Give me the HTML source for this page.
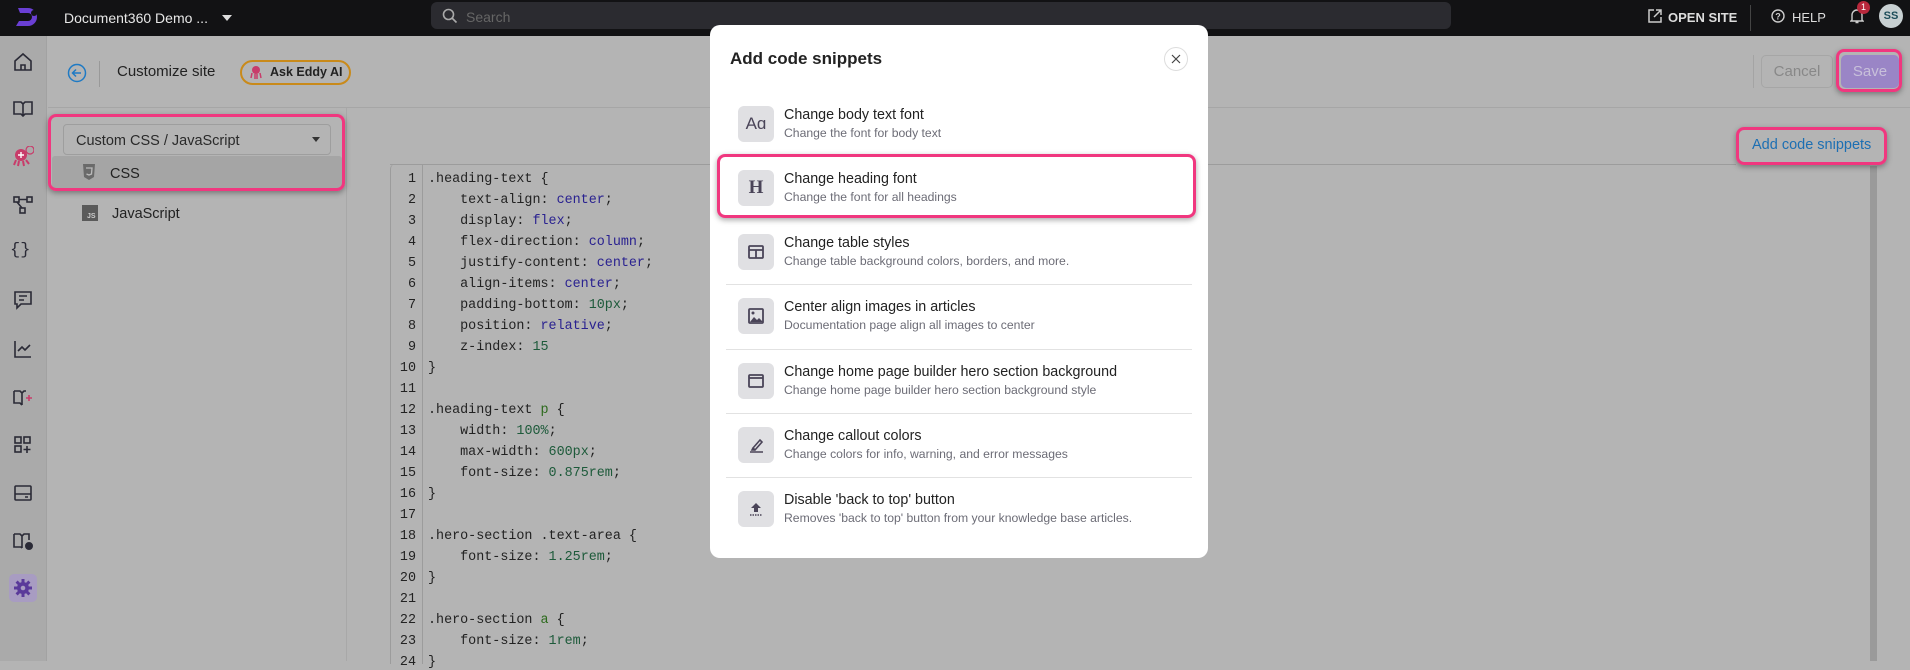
<!DOCTYPE html>
<html><head><meta charset="utf-8"><style>
*{box-sizing:border-box;margin:0;padding:0}
body{width:1910px;height:661px;overflow:hidden;position:relative;background:#b4b4b4;font-family:"Liberation Sans",sans-serif;color:#222}
.abs{position:absolute}
.top{left:0;top:0;width:1910px;height:36px;background:#121214}
.side{left:0;top:36px;width:47px;height:625px;background:#aaaaaa;border-right:1px solid #a2a2a2}
.ic{position:absolute;left:12px;width:22px;height:22px}
.pink{position:absolute;border:3px solid #f0377f;border-radius:8px;box-shadow:0 2px 6px rgba(0,0,0,.35)}
.code{font-family:"Liberation Mono",monospace;font-size:13.4px;color:#222}
.ln{position:absolute;left:390px;width:32px;text-align:right;padding-right:6px}
.cl{position:absolute;left:428px;white-space:pre}
.v{color:#2a2290}.n{color:#1d5a3a}.g{color:#2c6a1c}
.modal{left:710px;top:25px;width:498px;height:533px;background:#fff;border-radius:10px}
.item{position:absolute;left:28px;width:440px;height:60px}
.ibox{position:absolute;left:0;top:0;width:36px;height:36px;background:#e0e0e3;border-radius:6px;display:flex;align-items:center;justify-content:center;color:#4a4458}
.t{position:absolute;left:46px;top:1px;font-size:14.3px;color:#222;white-space:nowrap}
.s{position:absolute;left:46px;top:20px;font-size:12.2px;color:#6c6c76;white-space:nowrap}
.sep{position:absolute;left:16px;width:466px;height:1px;background:#e2e2e2}
</style></head><body>
<div class="abs top">
 <svg class="abs" style="left:14px;top:6px" width="26" height="24" viewBox="0 0 26 24"><path d="M4 2h10a9 9 0 0 1 0 18H2l3-5h9a4 4 0 0 0 0-8H6z" fill="#6a3fd4"/><circle cx="20" cy="7" r="3" fill="#121214"/></svg>
 <div class="abs" style="left:64px;top:10px;color:#e8e8e8;font-size:14px">Document360 Demo ...</div>
 <div class="abs" style="left:222px;top:15px;border-left:5px solid transparent;border-right:5px solid transparent;border-top:6px solid #ddd"></div>
 <div class="abs" style="left:431px;top:2px;width:1020px;height:27px;background:#2b2b30;border-radius:6px"></div>
 <svg class="abs" style="left:442px;top:8px" width="16" height="16" viewBox="0 0 16 16"><circle cx="6.5" cy="6.5" r="5" fill="none" stroke="#aaa" stroke-width="1.6"/><path d="M10 10l4.5 4.5" stroke="#aaa" stroke-width="1.6"/></svg>
 <div class="abs" style="left:466px;top:9px;color:#666;font-size:14px">Search</div>
 <svg class="abs" style="left:1648px;top:9px" width="14" height="14" viewBox="0 0 14 14"><path d="M6 1H1v12h12V8M8 1h5v5M13 1L6 8" fill="none" stroke="#ccc" stroke-width="1.5"/></svg>
 <div class="abs" style="left:1668px;top:10px;color:#ddd;font-size:13px;font-weight:bold">OPEN SITE</div>
 <div class="abs" style="left:1750px;top:5px;width:1px;height:26px;background:#444"></div>
 <svg class="abs" style="left:1771px;top:9px" width="14" height="14" viewBox="0 0 14 14"><circle cx="7" cy="7" r="6" fill="none" stroke="#ccc" stroke-width="1.4"/><text x="7" y="10.5" font-size="9" text-anchor="middle" fill="#ccc" font-family="Liberation Sans" font-weight="bold">?</text></svg>
 <div class="abs" style="left:1792px;top:10px;color:#ddd;font-size:13px">HELP</div>
 <svg class="abs" style="left:1850px;top:8px" width="14" height="16" viewBox="0 0 14 16"><path d="M2 12V7a5 5 0 0 1 10 0v5l1 1H1zM5.5 14.5h3" fill="none" stroke="#ccc" stroke-width="1.4"/></svg>
 <div class="abs" style="left:1857px;top:1px;width:13px;height:13px;border-radius:50%;background:#b8283c;color:#fff;font-size:9px;text-align:center;line-height:13px">1</div>
 <div class="abs" style="left:1879px;top:4px;width:24px;height:24px;border-radius:50%;background:#c8d0d2;color:#1d4d5a;font-size:11px;font-weight:bold;text-align:center;line-height:24px">SS</div>
</div>
<div class="abs side">
 <svg class="ic" style="top:15px" viewBox="0 0 22 22" fill="none" stroke="#2a2a36" stroke-width="1.6"><path d="M3 10L11 3l8 7v9H3zM9 19v-5h4v5"/></svg>
 <svg class="ic" style="top:61px" viewBox="0 0 22 22" fill="none" stroke="#2a2a36" stroke-width="1.6"><path d="M2 5h7l2 2 2-2h7v12h-7l-2 2-2-2H2zM11 7v12"/></svg>
 <svg class="ic" style="top:110px" viewBox="0 0 22 22"><circle cx="9" cy="9" r="6" fill="#c83c6a"/><path d="M4 14l-2 5M7 15l-1 5M11 15l1 5M14 14l3 4" stroke="#c83c6a" stroke-width="2"/><circle cx="18" cy="4" r="4" fill="none" stroke="#c83c6a" stroke-width="1.2"/><path d="M6 9h6M9 6v6" stroke="#fff" stroke-width="1.4"/></svg>
 <svg class="ic" style="top:158px" viewBox="0 0 22 22" fill="none" stroke="#2a2a36" stroke-width="1.6"><rect x="2" y="3" width="5" height="5"/><rect x="15" y="3" width="5" height="5"/><rect x="8" y="14" width="5" height="5"/><path d="M7 5.5h8M5 8l5 6"/></svg>
 <div class="abs" style="left:10px;top:205px;font-size:17px;color:#2a2a36;font-family:'Liberation Mono',monospace">{}</div>
 <svg class="ic" style="top:253px" viewBox="0 0 22 22" fill="none" stroke="#2a2a36" stroke-width="1.6"><path d="M3 3h16v12H9l-4 4v-4H3zM7 7h8M7 11h5"/></svg>
 <svg class="ic" style="top:302px" viewBox="0 0 22 22" fill="none" stroke="#2a2a36" stroke-width="1.6"><path d="M3 3v16h16M6 13l4-4 3 3 5-5"/></svg>
 <svg class="ic" style="top:350px" viewBox="0 0 22 22" fill="none" stroke="#2a2a36" stroke-width="1.6"><path d="M2 5h6l2 2 2-2h2M2 5v12h6l2 2M10 7v12"/><path d="M17 9v6M14 12h6" stroke="#c83c6a"/></svg>
 <svg class="ic" style="top:398px" viewBox="0 0 22 22" fill="none" stroke="#2a2a36" stroke-width="1.6"><rect x="3" y="3" width="6" height="6"/><rect x="12" y="3" width="6" height="6"/><rect x="3" y="12" width="6" height="6"/><path d="M15 12v7M11.5 15.5h7"/></svg>
 <svg class="ic" style="top:446px" viewBox="0 0 22 22" fill="none" stroke="#2a2a36" stroke-width="1.6"><rect x="3" y="4" width="16" height="14" rx="1"/><path d="M3 12h16M13 15h3"/></svg>
 <svg class="ic" style="top:494px" viewBox="0 0 22 22" fill="none" stroke="#2a2a36" stroke-width="1.6"><path d="M2 4h6l2 2 2-2h5v6M2 4v13h7l1 1M10 6v12"/><circle cx="17" cy="16" r="3.2" fill="#2a2a36"/></svg>
 <div class="abs" style="left:9px;top:538px;width:28px;height:28px;border-radius:5px;background:#a89cc2"></div>
 <svg class="ic" style="top:541px" viewBox="0 0 22 22"><circle cx="11" cy="11" r="6" fill="#5a3a9a"/><path d="M11 2v4M11 16v4M2 11h4M16 11h4M4.6 4.6l2.9 2.9M14.5 14.5l2.9 2.9M4.6 17.4l2.9-2.9M14.5 7.5l2.9-2.9" stroke="#5a3a9a" stroke-width="3"/><circle cx="11" cy="11" r="2.3" fill="#a89cc2"/></svg>
</div>
<div class="abs" style="left:48px;top:107px;width:1862px;height:1px;background:#a6a6a6"></div>
<svg class="abs" style="left:67px;top:63px" width="20" height="20" viewBox="0 0 20 20" fill="none" stroke="#1f7ac4" stroke-width="1.5"><circle cx="10" cy="10" r="8.5"/><path d="M14 10H6M9 6.5L5.5 10 9 13.5"/></svg>
<div class="abs" style="left:99px;top:61px;width:1px;height:26px;background:#999"></div>
<div class="abs" style="left:117px;top:63px;font-size:15px;color:#222">Customize site</div>
<div class="abs" style="left:240px;top:60px;width:111px;height:25px;border:2px solid #c98a1a;border-radius:13px"></div>
<svg class="abs" style="left:249px;top:64px" width="14" height="16" viewBox="0 0 14 16"><circle cx="7" cy="6" r="4" fill="#c83c6a"/><path d="M3 9l-1 5M6 10v5M8 10v5M11 9l1 5" stroke="#c83c6a" stroke-width="1.5"/></svg>
<div class="abs" style="left:270px;top:65px;font-size:12.5px;font-weight:bold;color:#222">Ask Eddy AI</div>
<div class="abs" style="left:1753px;top:55px;width:1px;height:33px;background:#a4a4a4"></div>
<div class="abs" style="left:1761px;top:55px;width:72px;height:33px;border:1px solid #a6a6a6;border-radius:5px;color:#888;font-size:15px;text-align:center;line-height:31px">Cancel</div>
<div class="abs" style="left:1841px;top:55px;width:58px;height:33px;background:#9a85c6;border-radius:5px;color:#c8c0da;font-size:15px;text-align:center;line-height:33px">Save</div>
<div class="pink" style="left:1836px;top:49px;width:66px;height:43px"></div>
<div class="abs" style="left:346px;top:108px;width:1px;height:553px;background:#a8a8a8"></div>
<div class="abs" style="left:63px;top:124px;width:268px;height:31px;border:1px solid #9e9e9e;border-radius:4px;font-size:14.5px;color:#2a2a2a;padding:8px 12px">Custom CSS / JavaScript</div>
<div class="abs" style="left:312px;top:137px;border-left:4px solid transparent;border-right:4px solid transparent;border-top:5px solid #333"></div>
<div class="abs" style="left:52px;top:156px;width:290px;height:34px;background:#a5a5a5;border-radius:3px"></div>
<svg class="abs" style="left:82px;top:164px" width="14" height="16" viewBox="0 0 14 16"><path d="M1 0h12l-1 13-5 3-5-3z" fill="#6a6a6a"/><path d="M4 4h6l-.5 6L7 11l-2.5-1" fill="none" stroke="#bbb" stroke-width="1.3"/></svg>
<div class="abs" style="left:110px;top:166px;font-size:14.5px;color:#222">CSS</div>
<div class="pink" style="left:48px;top:114px;width:297px;height:77px"></div>
<div class="abs" style="left:82px;top:205px;width:16px;height:16px;background:#5a5a5a;color:#ccc;font-size:7px;font-weight:bold;padding:8px 0 0 5px">JS</div>
<div class="abs" style="left:112px;top:206px;font-size:14.5px;color:#222">JavaScript</div>
<div class="abs" style="left:390px;top:164px;width:1346px;height:1px;background:#9c9c9c"></div>
<div class="abs" style="left:390px;top:164px;width:33px;height:500px;border-left:1px solid #9c9c9c;border-right:1px solid #9c9c9c;border-top-left-radius:5px"></div>
<div class="abs" style="left:1870px;top:166px;width:7px;height:495px;background:#9a9a9a"></div>
<div class="abs" style="left:1752px;top:137px;font-size:14.5px;color:#1c6fb3">Add code snippets</div>
<div class="pink" style="left:1736px;top:127px;width:151px;height:38px"></div>
<div class="code">
<div class="ln" style="top:172px">1</div><div class="cl" style="top:172px">.heading-text {</div>
<div class="ln" style="top:193px">2</div><div class="cl" style="top:193px">    text-align: <span class="v">center</span>;</div>
<div class="ln" style="top:214px">3</div><div class="cl" style="top:214px">    display: <span class="v">flex</span>;</div>
<div class="ln" style="top:235px">4</div><div class="cl" style="top:235px">    flex-direction: <span class="v">column</span>;</div>
<div class="ln" style="top:256px">5</div><div class="cl" style="top:256px">    justify-content: <span class="v">center</span>;</div>
<div class="ln" style="top:277px">6</div><div class="cl" style="top:277px">    align-items: <span class="v">center</span>;</div>
<div class="ln" style="top:298px">7</div><div class="cl" style="top:298px">    padding-bottom: <span class="n">10px</span>;</div>
<div class="ln" style="top:319px">8</div><div class="cl" style="top:319px">    position: <span class="v">relative</span>;</div>
<div class="ln" style="top:340px">9</div><div class="cl" style="top:340px">    z-index: <span class="n">15</span></div>
<div class="ln" style="top:361px">10</div><div class="cl" style="top:361px">}</div>
<div class="ln" style="top:382px">11</div>
<div class="ln" style="top:403px">12</div><div class="cl" style="top:403px">.heading-text <span class="g">p</span> {</div>
<div class="ln" style="top:424px">13</div><div class="cl" style="top:424px">    width: <span class="n">100%</span>;</div>
<div class="ln" style="top:445px">14</div><div class="cl" style="top:445px">    max-width: <span class="n">600px</span>;</div>
<div class="ln" style="top:466px">15</div><div class="cl" style="top:466px">    font-size: <span class="n">0.875rem</span>;</div>
<div class="ln" style="top:487px">16</div><div class="cl" style="top:487px">}</div>
<div class="ln" style="top:508px">17</div>
<div class="ln" style="top:529px">18</div><div class="cl" style="top:529px">.hero-section .text-area {</div>
<div class="ln" style="top:550px">19</div><div class="cl" style="top:550px">    font-size: <span class="n">1.25rem</span>;</div>
<div class="ln" style="top:571px">20</div><div class="cl" style="top:571px">}</div>
<div class="ln" style="top:592px">21</div>
<div class="ln" style="top:613px">22</div><div class="cl" style="top:613px">.hero-section <span class="g">a</span> {</div>
<div class="ln" style="top:634px">23</div><div class="cl" style="top:634px">    font-size: <span class="n">1rem</span>;</div>
<div class="ln" style="top:655px">24</div><div class="cl" style="top:655px">}</div>
</div>
<div class="abs modal">
 <div class="abs" style="left:20px;top:24px;font-size:17px;font-weight:bold;color:#222">Add code snippets</div>
 <div class="abs" style="left:454px;top:22px;width:24px;height:24px;border:1px solid #ddd;border-radius:50%"></div>
 <svg class="abs" style="left:461px;top:29px" width="10" height="10" viewBox="0 0 10 10"><path d="M1 1l8 8M9 1L1 9" stroke="#444" stroke-width="1.2"/></svg>
 <div class="item" style="top:81px"><div class="ibox" style="font-size:17px">Aɑ</div><div class="t">Change body text font</div><div class="s">Change the font for body text</div></div>
 <div class="pink" style="left:7px;top:129px;width:479px;height:64px;border-width:3px"></div>
 <div class="item" style="top:145px"><div class="ibox" style="font-family:'Liberation Serif',serif;font-size:19px;font-weight:bold">H</div><div class="t">Change heading font</div><div class="s">Change the font for all headings</div></div>
 <div class="item" style="top:209px"><div class="ibox"><svg width="16" height="14" viewBox="0 0 16 14" fill="none" stroke="#4a4458" stroke-width="1.8"><rect x="1" y="1" width="14" height="12" rx="1"/><path d="M1 5h14M8 5v8"/></svg></div><div class="t">Change table styles</div><div class="s">Change table background colors, borders, and more.</div></div>
 <div class="sep" style="top:259px"></div>
 <div class="item" style="top:273px"><div class="ibox"><svg width="16" height="16" viewBox="0 0 16 16"><rect x="1" y="1" width="14" height="14" rx="1" fill="none" stroke="#4a4458" stroke-width="1.8"/><path d="M2 14l4-5 3 3 2-2 4 4z" fill="#4a4458"/><circle cx="5" cy="5" r="1.5" fill="#4a4458"/></svg></div><div class="t">Center align images in articles</div><div class="s">Documentation page align all images to center</div></div>
 <div class="sep" style="top:324px"></div>
 <div class="item" style="top:338px"><div class="ibox"><svg width="16" height="14" viewBox="0 0 16 14" fill="none" stroke="#4a4458" stroke-width="1.8"><rect x="1" y="1" width="14" height="12" rx="1"/><path d="M1 4h14"/></svg></div><div class="t">Change home page builder hero section background</div><div class="s">Change home page builder hero section background style</div></div>
 <div class="sep" style="top:388px"></div>
 <div class="item" style="top:402px"><div class="ibox"><svg width="18" height="18" viewBox="0 0 18 18" fill="none" stroke="#4a4458" stroke-width="1.6"><path d="M6 12l7-8 2 2-7 8zM6 12l-1 2h3M3 16h13"/></svg></div><div class="t">Change callout colors</div><div class="s">Change colors for info, warning, and error messages</div></div>
 <div class="sep" style="top:452px"></div>
 <div class="item" style="top:466px"><div class="ibox"><svg width="16" height="16" viewBox="0 0 16 16"><path d="M8 2l5 5H10v4H6V7H3z" fill="#4a4458"/><path d="M2 14h12" stroke="#4a4458" stroke-width="1.4" stroke-dasharray="1.5 1"/></svg></div><div class="t">Disable 'back to top' button</div><div class="s">Removes 'back to top' button from your knowledge base articles.</div></div>
</div>
</body></html>
